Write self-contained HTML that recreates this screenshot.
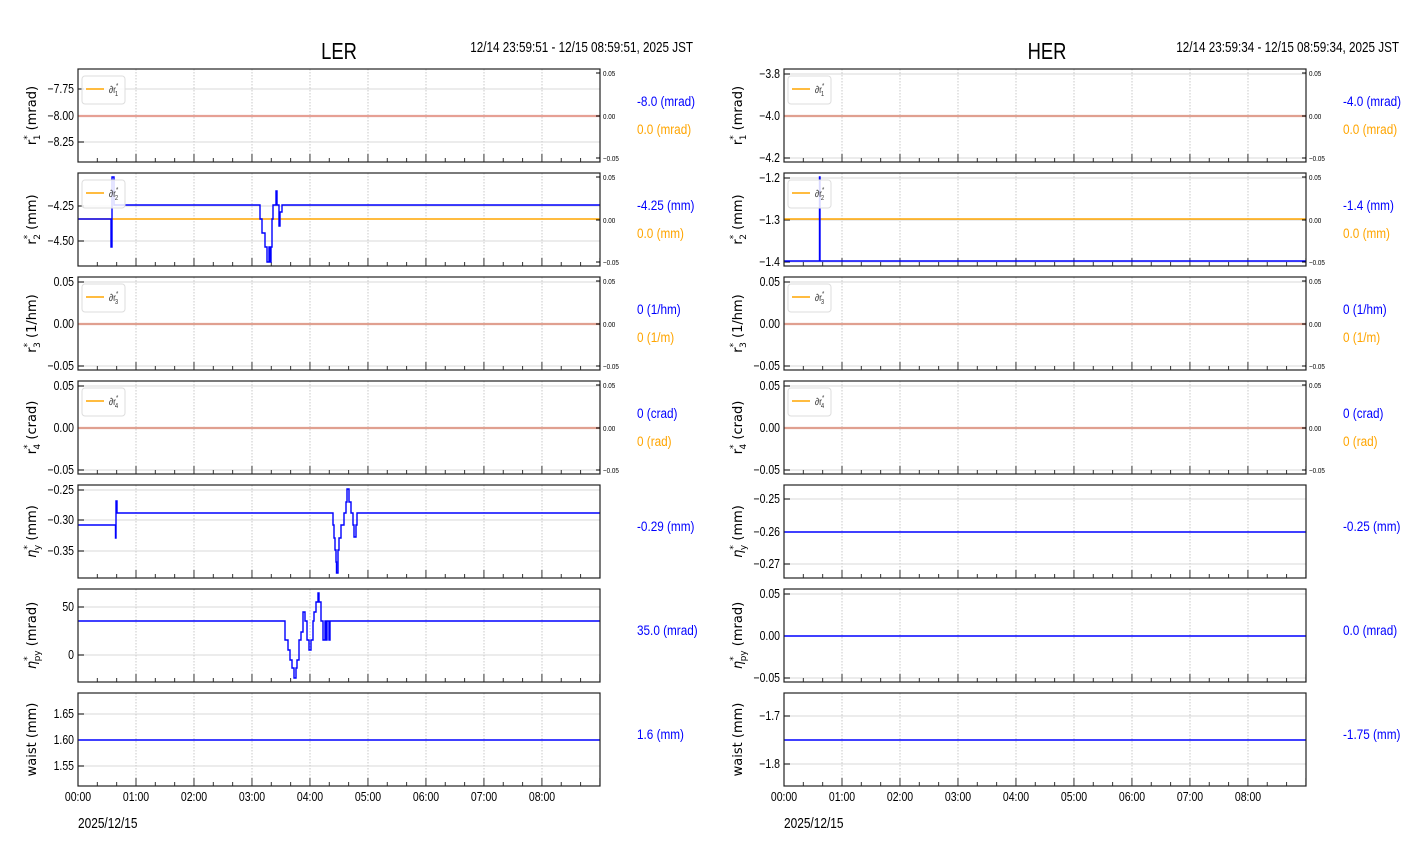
<!DOCTYPE html>
<html><head><meta charset="utf-8"><style>
html,body{margin:0;padding:0;background:#fff;}
svg{display:block;font-family:"Liberation Sans",sans-serif;}
</style></head><body>
<svg id="s" width="1412" height="864" xmlns="http://www.w3.org/2000/svg">
<text transform="translate(339 59) scale(0.8 1)" font-size="23" text-anchor="middle">LER</text>
<text transform="translate(693 52) scale(0.8 1)" font-size="14.6" text-anchor="end">12/14 23:59:51 - 12/15 08:59:51, 2025 JST</text>
<text transform="translate(1047 59) scale(0.8 1)" font-size="23" text-anchor="middle">HER</text>
<text transform="translate(1399 52) scale(0.8 1)" font-size="14.6" text-anchor="end">12/14 23:59:34 - 12/15 08:59:34, 2025 JST</text>
<text transform="translate(78 828) scale(0.82 1)" font-size="14.5">2025/12/15</text>
<text transform="translate(784 828) scale(0.82 1)" font-size="14.5">2025/12/15</text>
</svg>
<script>
var s=document.getElementById('s'),h='';
var T=[69,173,277,381,485,589,693],H=93,W=522;
function ln(x1,y1,x2,y2,c,w,d){h+='<line x1="'+x1+'" y1="'+y1+'" x2="'+x2+'" y2="'+y2+'" stroke="'+c+'" stroke-width="'+w+'"'+(d?' stroke-dasharray="'+d+'"':'')+'/>';}
function tx(x,y,t,sz,c,a,extra){
 if(extra) h+='<text x="'+x+'" y="'+y+'" font-size="'+sz+'" fill="'+(c||'#000')+'" text-anchor="'+(a||'start')+'" '+extra+'>'+t+'</text>';
 else h+='<text transform="translate('+x+' '+y+') scale(0.84 1)" font-size="'+sz+'" fill="'+(c||'#000')+'" text-anchor="'+(a||'start')+'">'+t+'</text>';}
var ylab=[['r<tspan font-size="9" dy="-6">*</tspan><tspan font-size="9" dy="10" dx="-5">1</tspan><tspan dy="-4"> (mrad)</tspan>'],
['r<tspan font-size="9" dy="-6">*</tspan><tspan font-size="9" dy="10" dx="-5">2</tspan><tspan dy="-4"> (mm)</tspan>'],
['r<tspan font-size="9" dy="-6">*</tspan><tspan font-size="9" dy="10" dx="-5">3</tspan><tspan dy="-4"> (1/hm)</tspan>'],
['r<tspan font-size="9" dy="-6">*</tspan><tspan font-size="9" dy="10" dx="-5">4</tspan><tspan dy="-4"> (crad)</tspan>'],
['<tspan font-style="italic">η</tspan><tspan font-size="9" dy="-6">*</tspan><tspan font-size="9" dy="10" dx="-5">y</tspan><tspan dy="-4"> (mm)</tspan>'],
['<tspan font-style="italic">η</tspan><tspan font-size="9" dy="-6">*</tspan><tspan font-size="9" dy="10" dx="-5">py</tspan><tspan dy="-4"> (mrad)</tspan>'],
['waist (mm)']];
function panel(X,i,yt,blue,orange,lab1,lab2,paths){
 var t=T[i];
 for(var k=1;k<9;k++){var x=X+k*58;ln(x,t,x,t+H,'#bbb',0.8,'1.5,1.5');}
 yt.forEach(function(a){ln(X,a[1],X+W,a[1],'#ccc',0.8);ln(X,a[1],X+6,a[1],'#000',1);tx(X-4,a[1]+4,a[0],12.5,'#000','end');});
 for(var k=0;k<=27;k++){var x=X+k*19.33;ln(x,t+H,x,t+H-(k%3==0?8:4),'#333',1);}
 if(orange!==null) h+=paths.o||'';
 h+=paths.b;
 h+='<rect x="'+X+'" y="'+t+'" width="'+W+'" height="'+H+'" fill="none" stroke="#222" stroke-width="1.2"/>';
 if(i<4){[[0.05,t+4],[0.00,t+47],[-0.05,t+89]].forEach(function(a){ln(X+W,a[1],X+W-4,a[1],'#000',1);tx(X+W+3,a[1]+3,a[0]==0?'0.00':(a[0]>0?'0.05':'−0.05'),7.5,'#000');});
  h+='<rect x="'+(X+4)+'" y="'+(t+7)+'" width="43" height="28" rx="3" fill="#fff" fill-opacity="0.85" stroke="#ddd"/>';
  ln(X+8,t+20,X+26,t+20,'orange',1.5);
  tx(X+31,t+24,'∂r<tspan font-size="7" dy="-5">*</tspan><tspan font-size="7" dy="8" dx="-4">'+(i+1)+'</tspan>',10,'#333');
  tx(X+559,t+37,lab1,14,'blue');tx(X+559,t+65,lab2,14,'orange');
 } else tx(X+559,t+46,lab1,14,'blue');
 var cy=t+H/2;
 tx(X-42,cy,ylab[i],13,'#000','middle','font-family="DejaVu Sans,sans-serif" transform="rotate(-90 '+(X-42)+' '+cy+')"');
}
function pl(pts,c,w){return '<polyline fill="none" stroke="'+c+'" stroke-width="'+(w||1.6)+'" points="'+pts+'"/>';}
function flat(X,y,c){return pl(X+','+y+' '+(X+W)+','+y,c);}
function steps(arr){var p='',prev=null;arr.forEach(function(a){if(prev!==null)p+=a[0]+','+prev+' ';p+=a[0]+','+a[1]+' ';prev=a[1];});return p;}
var L=78,R=784;
panel(L,0,[['−7.75',89],['−8.00',116],['−8.25',142]],1,1,'-8.0 (mrad)','0.0 (mrad)',{b:flat(L,116,'#e0a0a0').replace('1.6','2.2')+flat(L,116,'#e8a090')});
var b2=steps([[78,219],[110,219],[111,247],[112,177],[114,205],[259,205],[260,219],[262,233],[265,247],[267,262],[269,247],[270,262],[271,247],[272,219],[273,205],[276,191],[277,205],[279,226],[280,212],[282,205],[600,205]]);
panel(L,1,[['−4.25',206],['−4.50',241]],1,1,'-4.25 (mm)','0.0 (mm)',{b:flat(L,219,'orange')+pl(b2,'blue',1.4)});
panel(L,2,[['0.05',282],['0.00',324],['−0.05',366]],1,1,'0 (1/hm)','0 (1/m)',{b:flat(L,324,'#e0a090').replace('1.6','2.2')});
panel(L,3,[['0.05',386],['0.00',428],['−0.05',470]],1,1,'0 (crad)','0 (rad)',{b:flat(L,428,'#e0a090').replace('1.6','2.2')});
var b5=steps([[78,525],[115,525],[115.5,538],[116,501],[117,513],[332,513],[333,525],[334,538],[335,550],[336,562],[336.5,573],[338,550],[339,538],[341,525],[344,513],[346,502],[347,489],[349,502],[351,513],[353,525],[354,537],[356,525],[357,513],[600,513]]);
panel(L,4,[['−0.25',490],['−0.30',520],['−0.35',551]],1,null,'-0.29 (mm)','',{b:pl(b5,'blue',1.4)});
var b6=steps([[78,621],[283,621],[285,640],[288,650],[290,660],[292,668],[294,678],[296,668],[297,660],[299,640],[301,632],[303,612],[305,621],[307,640],[309,650],[311,640],[313,621],[314,612],[316,602],[318,593],[319,602],[321,621],[323,640],[325,621],[326,640],[327,621],[329,640],[330,621],[600,621]]);
panel(L,5,[['50',607],['0',655]],1,null,'35.0 (mrad)','',{b:pl(b6,'blue',1.4)});
panel(L,6,[['1.65',714],['1.60',740],['1.55',766]],1,null,'1.6 (mm)','',{b:flat(L,740,'blue')});
panel(R,0,[['−3.8',74],['−4.0',116],['−4.2',158]],1,1,'-4.0 (mrad)','0.0 (mrad)',{b:flat(R,116,'#e0a090').replace('1.6','2.2')});
panel(R,1,[['−1.2',178],['−1.3',220],['−1.4',262]],1,1,'-1.4 (mm)','0.0 (mm)',{b:flat(R,219,'orange')+pl(steps([[784,261],[819,261],[819.5,177],[820,261],[1306,261]]),'blue',1.4)});
panel(R,2,[['0.05',282],['0.00',324],['−0.05',366]],1,1,'0 (1/hm)','0 (1/m)',{b:flat(R,324,'#e0a090').replace('1.6','2.2')});
panel(R,3,[['0.05',386],['0.00',428],['−0.05',470]],1,1,'0 (crad)','0 (rad)',{b:flat(R,428,'#e0a090').replace('1.6','2.2')});
panel(R,4,[['−0.25',499],['−0.26',532],['−0.27',564]],1,null,'-0.25 (mm)','',{b:flat(R,532,'blue')});
panel(R,5,[['0.05',594],['0.00',636],['−0.05',678]],1,null,'0.0 (mrad)','',{b:flat(R,636,'blue')});
panel(R,6,[['−1.7',716],['−1.8',764]],1,null,'-1.75 (mm)','',{b:flat(R,740,'blue')});
[L,R].forEach(function(X){for(var k=0;k<9;k++)tx(X+k*58,801,'0'+k+':00',12.5,'#000','middle');});
s.insertAdjacentHTML('beforeend',h);
</script>
</body></html>
